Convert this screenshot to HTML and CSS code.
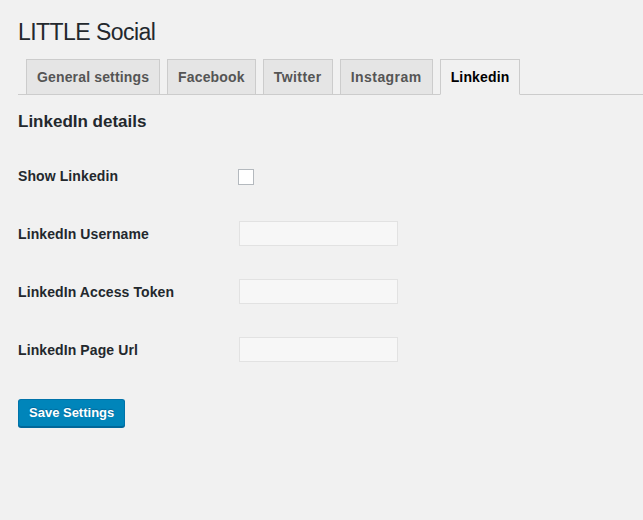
FILE: index.html
```html
<!DOCTYPE html>
<html>
<head>
<meta charset="utf-8">
<link rel="stylesheet" href="styles.css">
</head>
<body>
<div class="wrap">
  <h1 class="title">LITTLE Social</h1>
  <nav class="tabs">
    <a class="tab">General settings</a>
    <a class="tab">Facebook</a>
    <a class="tab tab-wide">Twitter</a>
    <a class="tab tab-wide">Instagram</a>
    <a class="tab active">Linkedin</a>
  </nav>
  <h2 class="section">LinkedIn details</h2>
  <form class="form">
    <div class="row">
      <label class="label">Show Linkedin</label>
      <div class="control"><span class="checkbox"></span></div>
    </div>
    <div class="row">
      <label class="label">LinkedIn Username</label>
      <div class="control"><input class="input" type="text"></div>
    </div>
    <div class="row">
      <label class="label">LinkedIn Access Token</label>
      <div class="control"><input class="input" type="text"></div>
    </div>
    <div class="row">
      <label class="label">LinkedIn Page Url</label>
      <div class="control"><input class="input" type="text"></div>
    </div>
    <div class="submit">
      <button class="button" type="button">Save Settings</button>
    </div>
  </form>
</div>
</body>
</html>
```

FILE: styles.css
```css
html, body {
  margin: 0;
  padding: 0;
  background: #f1f1f1;
}
body {
  font-family: "Liberation Sans", Arial, sans-serif;
  color: #23282d;
  width: 643px;
  height: 520px;
  overflow: hidden;
}
.wrap {
  padding: 17px 0 0 18px;
}
.title {
  margin: 0;
  font-size: 23px;
  line-height: 30px;
  font-weight: 400;
  letter-spacing: -0.55px;
  color: #23282d;
}
.tabs {
  display: flex;
  margin-top: 12px;
  border-bottom: 1px solid #ccc;
  height: 35px;
}
.tab {
  display: block;
  box-sizing: border-box;
  height: 35px;
  margin-left: 7px;
  padding: 5px 10px;
  border: 1px solid #ccc;
  border-bottom: none;
  background: #e5e5e5;
  color: #555;
  font-size: 14px;
  line-height: 24px;
  font-weight: 700;
  letter-spacing: 0.15px;
  white-space: nowrap;
}
.tab:first-child {
  margin-left: 8px;
}
.tab-wide {
  letter-spacing: 0.45px;
}
.tab.active {
  background: #f1f1f1;
  color: #000;
  height: 36px;
  border-bottom: 1px solid #f1f1f1;
}
.section {
  margin: 16px 0 0;
  font-size: 17px;
  line-height: 22px;
  font-weight: 700;
  color: #23282d;
}
.form {
  margin-top: 14px;
}
.row {
  display: grid;
  grid-template-columns: 220px 1fr;
  align-items: center;
  height: 58px;
}
.label {
  font-size: 14px;
  line-height: 18px;
  font-weight: 700;
  color: #23282d;
  letter-spacing: 0.1px;
}
.control {
  display: flex;
  align-items: center;
}
.checkbox {
  display: block;
  box-sizing: border-box;
  width: 16px;
  height: 16px;
  margin-top: 1px;
  border: 1px solid #b4b9be;
  background: #fff;
}
.input {
  box-sizing: border-box;
  width: 159px;
  height: 25px;
  margin: -1px 0 0 1px;
  padding: 0 6px;
  border: 1px solid #e2e2e2;
  background: #f7f7f7;
  outline: none;
  box-shadow: none;
}
.submit {
  margin-top: 20px;
}
.button {
  box-sizing: border-box;
  height: 28px;
  padding: 0 10px 1px;
  border: 1px solid #0073aa;
  border-bottom-color: #006799;
  border-radius: 3px;
  background: #0085ba;
  box-shadow: 0 1px 0 #006799;
  color: #fff;
  font-family: "Liberation Sans", Arial, sans-serif;
  font-size: 13px;
  line-height: 26px;
  font-weight: 700;
  text-shadow: 0 -1px 1px #006799;
}
```
